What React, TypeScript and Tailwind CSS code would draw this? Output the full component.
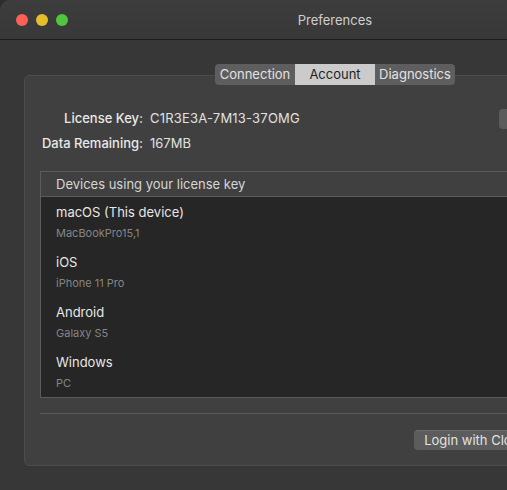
const devices = [
  { name: 'macOS (This device)', model: 'MacBookPro15,1' },
  { name: 'iOS', model: 'iPhone 11 Pro' },
  { name: 'Android', model: 'Galaxy S5' },
  { name: 'Windows', model: 'PC' },
]

const tabs = ['Connection', 'Account', 'Diagnostics']

export default function App() {
  return (
    <div className="w-[507px] h-[490px] overflow-hidden bg-[#2c2c2c] font-['Inter','Liberation_Sans',sans-serif] text-[13px]">
      <div className="w-[670px] h-[490px] rounded-tl-[10px] overflow-hidden bg-[#373737] flex flex-col">
        {/* title bar */}
        <div className="h-[40px] shrink-0 relative flex items-center justify-center pt-[2px] bg-gradient-to-b from-[#3d3d3d] to-[#383838] border-b border-[#1d1d1d]">
          <div className="absolute left-[16px] top-[14px] flex gap-[8px]">
            <span className="w-[12px] h-[12px] rounded-full bg-[#fe5f57]" />
            <span className="w-[12px] h-[12px] rounded-full bg-[#e5bf2b]" />
            <span className="w-[12px] h-[12px] rounded-full bg-[#4ec63d]" />
          </div>
          <span className="text-[#cfcfcf] text-[13px]">Preferences</span>
        </div>

        <div className="px-[24px] pt-[24px] flex flex-col">
          {/* tabs */}
          <div className="relative z-10 self-center flex rounded-[4px] overflow-hidden bg-[#5e5e5e] h-[21px]">
            {tabs.map(t => (
              <div
                key={t}
                className={
                  t === 'Account'
                    ? 'w-[80px] flex items-center justify-center bg-[#cbcbcb] text-[#1f1f1f]'
                    : 'w-[80px] flex items-center justify-center text-[#e2e2e2]'
                }
              >
                {t}
              </div>
            ))}
          </div>

          {/* panel */}
          <div className="-mt-[10px] rounded-[5px] border border-[#4c4c4c] bg-[#404040] px-[15px] pt-[30px] pb-[15px]">
            <div className="flex items-center h-[25px]">
              <span className="w-[103px] text-right font-medium text-[#e8e8e8]">License Key:</span>
              <span className="ml-[7px] text-[#e0e0e0] tracking-[0.2px]">C1R3E3A-7M13-37OMG</span>
              <button className="ml-auto w-[131px] h-[20px] rounded-[4px] bg-[#5c5c5c] text-[#e0e0e0] text-[13px]">
                Change License
              </button>
            </div>
            <div className="flex items-center h-[25px]">
              <span className="w-[103px] text-right font-medium text-[#e8e8e8]">Data Remaining:</span>
              <span className="ml-[7px] text-[#e0e0e0]">167MB</span>
            </div>

            {/* devices table */}
            <div className="mt-[15px] border border-[#5c5c5c]">
              <div className="h-[25px] flex items-center px-[15px] pt-[1px] border-b border-[#5c5c5c] text-[#d6d6d6]">
                Devices using your license key
              </div>
              <div className="bg-[#262626]">
                {devices.map(d => (
                  <div key={d.name} className="h-[50px] px-[15px] pt-[5px]">
                    <div className="leading-[20px] text-[#e6e6e6]">{d.name}</div>
                    <div className="leading-[22px] text-[11px] text-[#858585]">{d.model}</div>
                  </div>
                ))}
              </div>
            </div>

            <div className="mt-[15px] h-px bg-[#5c5c5c]" />

            <div className="mt-[16px] flex justify-end">
              <button className="w-[216px] h-[20px] rounded-[4px] bg-[#5c5c5c] text-[#e2e2e2] text-[13px] border-t border-[#6a6a6a]">
                Login with Cloudflare for Teams
              </button>
            </div>
          </div>
        </div>
      </div>
    </div>
  )
}
